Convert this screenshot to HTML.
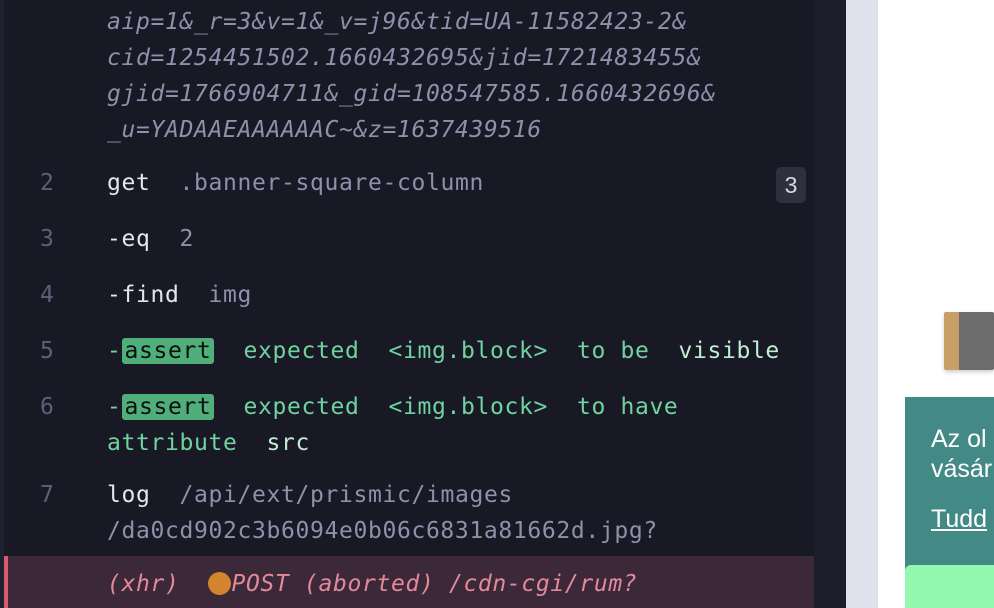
<!DOCTYPE html>
<html><head><meta charset="utf-8"><style>
*{margin:0;padding:0;box-sizing:border-box}
body{width:994px;height:608px;overflow:hidden;background:#fff;position:relative;font-family:"DejaVu Sans Mono","Liberation Mono",monospace;font-size:23px;letter-spacing:0.65px}
.l{position:absolute;white-space:pre;line-height:36px}
.n{position:absolute;left:40px;color:#5c6079;line-height:36px}
.u{color:#8d91ab;font-style:italic}
.c{color:#e3e5f0}
.g{color:#6fd3a0}
.a{background:#4fae79;color:#0b0f12;border-radius:3px;padding:0 3px}
.d{color:#8d91ab}
</style></head><body>
<div style="position:absolute;left:0;top:0;width:814px;height:608px;background:#181924"></div>
<div style="position:absolute;left:0;top:0;width:4px;height:608px;background:#1f2130"></div>
<div style="position:absolute;left:814px;top:0;width:32px;height:608px;background:#1b1d2b"></div>
<div style="position:absolute;left:846px;top:0;width:32px;height:608px;background:#e0e1ec"></div>
<div style="position:absolute;left:905px;top:397px;width:89px;height:211px;background:#438a86"></div>
<div style="position:absolute;left:905px;top:565px;width:89px;height:43px;background:#92f9ae;border-radius:6px 0 0 0"></div>
<div style="position:absolute;left:944px;top:312px;width:50px;height:58px;background:linear-gradient(90deg,#c99f68 0 30%,#6c6c6c 30%);box-shadow:0 2px 4px #ccc;border-radius:2px"></div>
<div style="position:absolute;left:931px;top:424px;font-family:'Liberation Sans',sans-serif;font-size:25px;color:#fff;line-height:30px;letter-spacing:0">Az ol<br>vásár</div>
<div style="position:absolute;left:931px;top:505px;font-family:'Liberation Sans',sans-serif;font-size:25px;color:#fff;text-decoration:underline;letter-spacing:0">Tudd</div>

<div class="l u" style="left:107px;top:4px">aip=1&amp;_r=3&amp;v=1&amp;_v=j96&amp;tid=UA-11582423-2&amp;</div>
<div class="l u" style="left:107px;top:40px">cid=1254451502.1660432695&amp;jid=1721483455&amp;</div>
<div class="l u" style="left:107px;top:76px">gjid=1766904711&amp;_gid=108547585.1660432696&amp;</div>
<div class="l u" style="left:107px;top:112px">_u=YADAAEAAAAAAC~&amp;z=1637439516</div>

<div class="n" style="top:165px">2</div>
<div class="l" style="left:107px;top:165px"><span class="c">get</span>  <span class="d">.banner-square-column</span></div>
<div style="position:absolute;left:776px;top:167px;width:30px;height:36px;background:#2e3040;border-radius:5px;color:#d6d8e4;text-align:center;line-height:36px;font-family:'Liberation Sans',sans-serif;font-size:23px;letter-spacing:0">3</div>

<div class="n" style="top:221px">3</div>
<div class="l" style="left:107px;top:221px"><span class="c">-eq</span>  <span class="d">2</span></div>

<div class="n" style="top:277px">4</div>
<div class="l" style="left:107px;top:277px"><span class="c">-find</span>  <span class="d">img</span></div>

<div class="n" style="top:333px">5</div>
<div class="l" style="left:107px;top:333px"><span class="g">-</span><span class="a">assert</span>  <span class="g">expected</span>  <span class="g">&lt;img.block&gt;</span>  <span class="g">to be</span>  <span class="g" style="color:#bfeed4">visible</span></div>

<div class="n" style="top:389px">6</div>
<div class="l" style="left:107px;top:389px"><span class="g">-</span><span class="a">assert</span>  <span class="g">expected</span>  <span class="g">&lt;img.block&gt;</span>  <span class="g">to have</span></div>
<div class="l" style="left:107px;top:425px"><span class="g">attribute</span>  <span class="g" style="color:#bfeed4">src</span></div>

<div class="n" style="top:477px">7</div>
<div class="l" style="left:107px;top:477px"><span class="c">log</span>  <span class="d">/api/ext/prismic/images</span></div>
<div class="l d" style="left:107px;top:513px">/da0cd902c3b6094e0b06c6831a81662d.jpg?</div>

<div style="position:absolute;left:4px;top:556px;width:810px;height:52px;background:#3b2838;border-left:4px solid #d9596f"></div>
<div class="l" style="left:107px;top:566px;color:#e4899a;font-style:italic">(xhr)  <span style="display:inline-block;width:23px;height:23px;border-radius:50%;background:#d4832e;vertical-align:-4px"></span>POST (aborted) /cdn-cgi/rum?</div>
</body></html>
